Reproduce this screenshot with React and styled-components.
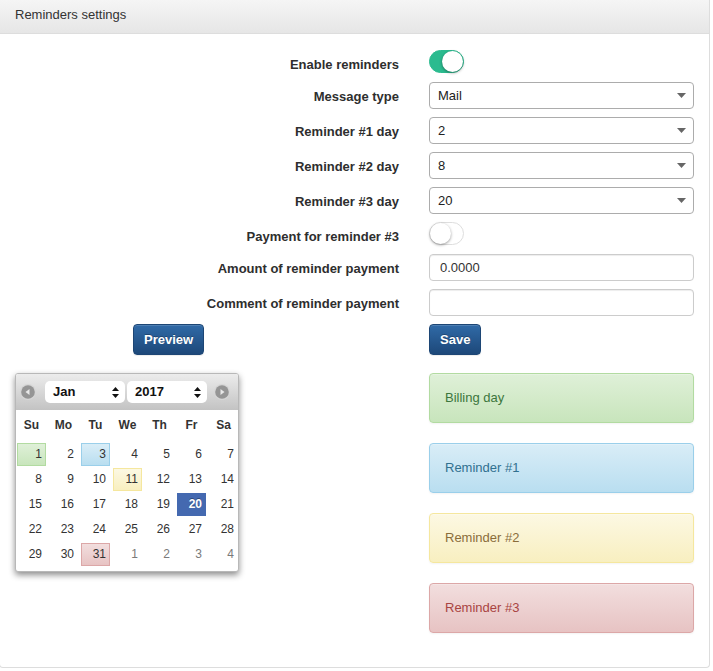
import React from 'react';
import styled, { createGlobalStyle, css } from 'styled-components';

const Global = createGlobalStyle`
  html, body { margin: 0; padding: 0; background: #fff; }
  body {
    font-family: "Liberation Sans", Arial, Helvetica, sans-serif;
    color: #333;
    font-size: 13px;
  }
`;

const FONT = `"Liberation Sans", Arial, Helvetica, sans-serif`;

const Panel = styled.div`
  box-sizing: border-box;
  width: 711px;
  margin-left: -1px;
  border: 1px solid #ddd;
  border-top: none;
  border-radius: 0 0 4px 4px;
  background: #fff;
`;

const Header = styled.div`
  box-sizing: border-box;
  height: 34px;
  padding: 6px 15px 0;
  border-bottom: 1px solid #ddd;
  background: linear-gradient(#f5f5f5, #e6e6e6);
  font-size: 13px;
  line-height: 18px;
  color: #333;
`;

const Body = styled.div`
  display: flex;
  flex-direction: column;
  gap: 18px;
  padding: 16px 0 34px;
`;

const Form = styled.div`
  display: flex;
  flex-direction: column;
  gap: 8px;
`;

const Row = styled.div`
  display: grid;
  grid-template-columns: 399px 265px;
  column-gap: 30px;
  align-items: start;
`;

const Label = styled.label`
  text-align: right;
  font-weight: bold;
  font-size: 13px;
  line-height: 18px;
  padding-top: 6px;
  color: #2e2e2e;
`;

const Toggle = styled.span`
  position: relative;
  display: block;
  box-sizing: border-box;
  width: 35px;
  height: 23px;
  border-radius: 12px;
  background: ${p => (p.$on ? '#2bbb8f' : '#fff')};
  border: 1px solid ${p => (p.$on ? '#2bbb8f' : '#dedede')};
`;

const Knob = styled.span`
  position: absolute;
  top: 0;
  left: ${p => (p.$on ? '12px' : '0')};
  width: 21px;
  height: 21px;
  border-radius: 50%;
  background: #fff;
  box-shadow: 0 1px 3px rgba(0, 0, 0, 0.4);
`;

const SelectWrap = styled.div`
  position: relative;
  height: 27px;
`;

const NativeSelect = styled.select`
  appearance: none;
  -webkit-appearance: none;
  box-sizing: border-box;
  width: 100%;
  height: 27px;
  margin: 0;
  padding: 0 24px 0 8px;
  border: 1px solid #acacac;
  border-radius: 4px;
  background: #fff;
  font-family: ${FONT};
  font-size: 13px;
  color: #222;
  outline: none;
`;

const Caret = styled.svg`
  position: absolute;
  right: 8px;
  top: 11px;
  pointer-events: none;
`;

const TextInput = styled.input`
  box-sizing: border-box;
  width: 100%;
  height: 27px;
  margin: 0;
  padding: 0 10px;
  border: 1px solid #ccc;
  border-radius: 4px;
  box-shadow: inset 0 1px 1px rgba(0, 0, 0, 0.075);
  font-family: ${FONT};
  font-size: 13px;
  color: #333;
  outline: none;
`;

const Button = styled.button`
  justify-self: start;
  box-sizing: border-box;
  height: 31px;
  margin: 0 0 0 ${p => p.$offset || 0}px;
  padding: 6px 10px;
  font-family: ${FONT};
  font-weight: bold;
  font-size: 13px;
  line-height: 17px;
  color: #fff;
  border: 1px solid #1d4675;
  border-radius: 4px;
  background: linear-gradient(#306aa7, #1d4879);
  text-shadow: 0 -1px 0 rgba(0, 0, 0, 0.25);
  box-shadow: inset 0 1px 0 rgba(255, 255, 255, 0.15), 0 1px 1px rgba(0, 0, 0, 0.075);
`;

const Bottom = styled.div`
  display: grid;
  grid-template-columns: 399px 265px;
  column-gap: 30px;
  align-items: start;
`;

const Calendar = styled.div`
  margin-left: 15px;
  width: 224px;
  box-sizing: border-box;
  border: 1px solid #b8b8b8;
  border-radius: 3px;
  background: #fff;
  box-shadow: 0 3px 6px rgba(0, 0, 0, 0.45);
  overflow: hidden;
`;

const CalHead = styled.div`
  height: 36px;
  display: flex;
  align-items: center;
  background: linear-gradient(#ececec, #c3c3c3);
`;

const NavIcon = styled.svg`
  display: block;
  flex: none;
  margin-left: ${p => p.$ml}px;
`;

const MiniSelect = styled.div`
  position: relative;
  box-sizing: border-box;
  width: 80px;
  height: 22px;
  margin-left: ${p => p.$ml}px;
  padding-left: 8px;
  border-radius: 5px;
  background: #fff;
  font-weight: bold;
  font-size: 13px;
  line-height: 22px;
  color: #111;
`;

const UpDown = styled.svg`
  position: absolute;
  right: 6px;
  top: 6px;
`;

const DayGrid = styled.div`
  display: grid;
  grid-template-columns: repeat(7, 29px);
  column-gap: 3px;
  row-gap: 2px;
  padding: 0 0 5px 1px;
`;

const WeekDay = styled.div`
  height: 31px;
  line-height: 31px;
  text-align: center;
  font-weight: bold;
  font-size: 12px;
  color: #333;
`;

const tones = {
  green: css`
    background: linear-gradient(#dff0d8, #c8e5bc);
    border-color: #b2dba1;
  `,
  blue: css`
    background: linear-gradient(#d9edf7, #b9def0);
    border-color: #9acfea;
  `,
  yellow: css`
    background: linear-gradient(#fcf8e3, #f8efc0);
    border-color: #f5e79e;
  `,
  red: css`
    background: linear-gradient(#f2dede, #e7c3c3);
    border-color: #dca7a7;
  `,
  selected: css`
    background: #4469b0;
    border-color: #4469b0;
    color: #fff;
    font-weight: bold;
    text-shadow: 0 -1px 0 rgba(0, 0, 0, 0.35);
  `,
};

const Day = styled.div`
  box-sizing: border-box;
  height: 23px;
  line-height: 21px;
  padding-right: 3px;
  text-align: right;
  font-size: 12px;
  color: ${p => (p.$muted ? '#7a7a7a' : '#333')};
  border: 1px solid transparent;
  ${p => p.$tone && tones[p.$tone]}
`;

const Alerts = styled.div`
  display: flex;
  flex-direction: column;
  gap: 20px;
`;

const alertTones = {
  success: css`
    background: linear-gradient(#dff0d8, #c8e5bc);
    border-color: #b2dba1;
    color: #3c763d;
  `,
  info: css`
    background: linear-gradient(#d9edf7, #b9def0);
    border-color: #9acfea;
    color: #31708f;
  `,
  warning: css`
    background: linear-gradient(#fcf8e3, #f8efc0);
    border-color: #f5e79e;
    color: #8a6d3b;
  `,
  danger: css`
    background: linear-gradient(#f2dede, #e7c3c3);
    border-color: #dca7a7;
    color: #a94442;
  `,
};

const Alert = styled.div`
  box-sizing: border-box;
  height: 50px;
  padding: 15px;
  border: 1px solid;
  border-radius: 4px;
  font-size: 13px;
  line-height: 18px;
  box-shadow: inset 0 1px 0 rgba(255, 255, 255, 0.25), 0 1px 2px rgba(0, 0, 0, 0.05);
  ${p => alertTones[p.$tone]}
`;

function Select({ value }) {
  return (
    <SelectWrap>
      <NativeSelect defaultValue={value}>
        <option value={value}>{value}</option>
      </NativeSelect>
      <Caret width="9" height="5" viewBox="0 0 9 5">
        <polygon points="0,0 9,0 4.5,5" fill="#666" />
      </Caret>
    </SelectWrap>
  );
}

function SwitchCtl({ on }) {
  return (
    <Toggle $on={on}>
      <Knob $on={on} />
    </Toggle>
  );
}

function NavArrow({ dir, ml }) {
  const pts = dir === 'left' ? '9.5,5 9.5,11 5.5,8' : '6.5,5 6.5,11 10.5,8';
  return (
    <NavIcon $ml={ml} width="16" height="16" viewBox="0 0 16 16">
      <circle cx="8" cy="8" r="8" fill="#d6d6d6" />
      <circle cx="8" cy="8" r="6.8" fill="#959595" />
      <polygon points={pts} fill="#e8e8e8" />
    </NavIcon>
  );
}

function Mini({ value, ml }) {
  return (
    <MiniSelect $ml={ml}>
      {value}
      <UpDown width="7" height="11" viewBox="0 0 7 11">
        <polygon points="3.5,0 7,4 0,4" fill="#111" />
        <polygon points="0,7 7,7 3.5,11" fill="#111" />
      </UpDown>
    </MiniSelect>
  );
}

const weekDays = ['Su', 'Mo', 'Tu', 'We', 'Th', 'Fr', 'Sa'];
const marks = { 1: 'green', 3: 'blue', 11: 'yellow', 20: 'selected', 31: 'red' };
const days = [
  ...Array.from({ length: 31 }, (_, i) => ({ n: i + 1, muted: false })),
  ...[1, 2, 3, 4].map(n => ({ n, muted: true })),
];

export default function App() {
  return (
    <>
      <Global />
      <Panel>
        <Header>Reminders settings</Header>
        <Body>
          <Form>
            <Row>
              <Label>Enable reminders</Label>
              <SwitchCtl on />
            </Row>
            <Row>
              <Label>Message type</Label>
              <Select value="Mail" />
            </Row>
            <Row>
              <Label>Reminder #1 day</Label>
              <Select value="2" />
            </Row>
            <Row>
              <Label>Reminder #2 day</Label>
              <Select value="8" />
            </Row>
            <Row>
              <Label>Reminder #3 day</Label>
              <Select value="20" />
            </Row>
            <Row>
              <Label>Payment for reminder #3</Label>
              <SwitchCtl on={false} />
            </Row>
            <Row>
              <Label>Amount of reminder payment</Label>
              <TextInput defaultValue="0.0000" />
            </Row>
            <Row>
              <Label>Comment of reminder payment</Label>
              <TextInput defaultValue="" />
            </Row>
            <Row>
              <Button $offset={133}>Preview</Button>
              <Button>Save</Button>
            </Row>
          </Form>
          <Bottom>
            <Calendar>
              <CalHead>
                <NavArrow dir="left" ml={4} />
                <Mini value="Jan" ml={9} />
                <Mini value="2017" ml={2} />
                <NavArrow dir="right" ml={7} />
              </CalHead>
              <DayGrid>
                {weekDays.map(w => (
                  <WeekDay key={w}>{w}</WeekDay>
                ))}
                {days.map((d, i) => (
                  <Day key={i} $muted={d.muted} $tone={d.muted ? undefined : marks[d.n]}>
                    {d.n}
                  </Day>
                ))}
              </DayGrid>
            </Calendar>
            <Alerts>
              <Alert $tone="success">Billing day</Alert>
              <Alert $tone="info">Reminder #1</Alert>
              <Alert $tone="warning">Reminder #2</Alert>
              <Alert $tone="danger">Reminder #3</Alert>
            </Alerts>
          </Bottom>
        </Body>
      </Panel>
    </>
  );
}
